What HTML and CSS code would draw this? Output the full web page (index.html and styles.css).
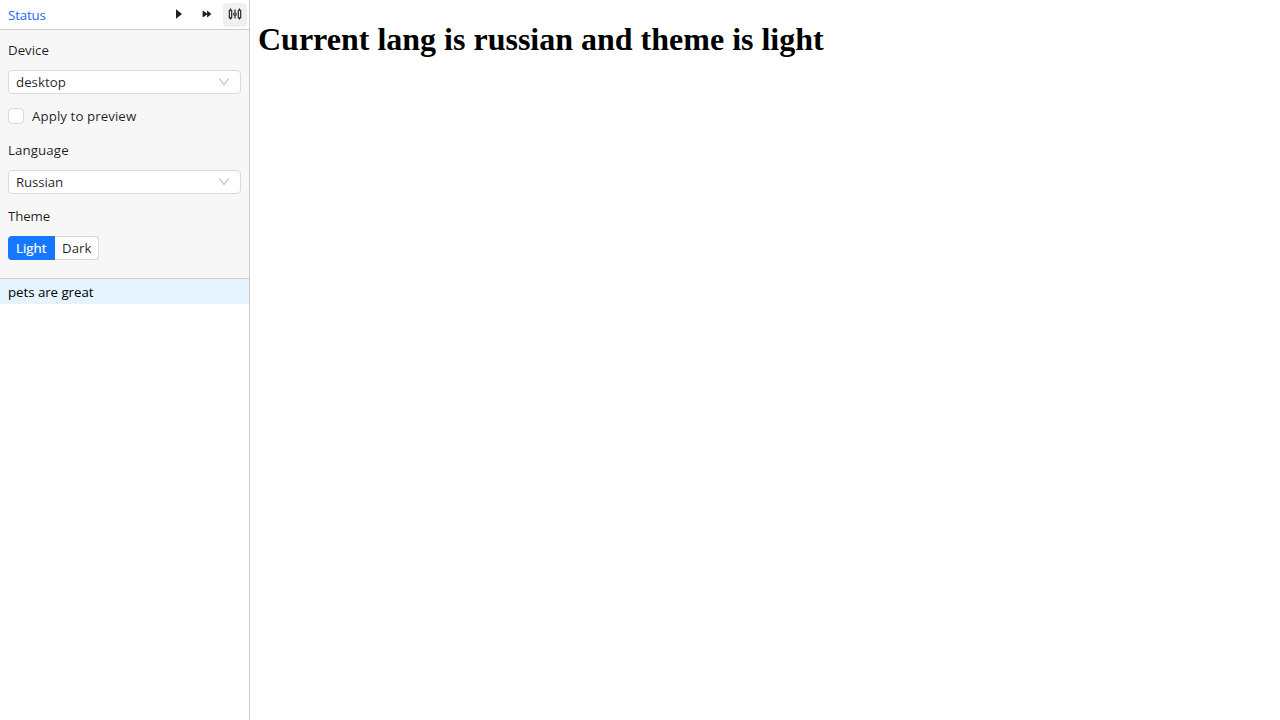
FILE: index.html
```html
<!DOCTYPE html>
<html lang="en">
<head>
<meta charset="utf-8">
<title>Preview</title>
<link rel="stylesheet" href="styles.css">
</head>
<body>
<aside class="sidebar">
  <header class="toolbar">
    <a class="status">Status</a>
    <div class="actions">
      <button class="icon-btn" aria-label="Run"><svg width="14" height="14" viewBox="0 0 14 14"><path d="M4 1.2 10 6 4 10.8Z"/></svg></button>
      <button class="icon-btn" aria-label="Run all"><svg width="14" height="14" viewBox="0 0 14 14"><path d="M2.6 2.5 7.1 5.6V2.5L11.5 6 7.1 9.5V6.5L2.6 9.6Z"/></svg></button>
      <button class="icon-btn active" aria-label="Settings"><svg width="14" height="14" viewBox="0 0 14 14"><path class="line" d="M2.5 .5V2M2.5 10V11.5M1.3 2.2H3.7V9.8H1.3ZM7 1.5V4.3M7 7.7V10.5M11.5 .5V2M11.5 10V11.5M10.3 2.2H12.7V9.8H10.3Z"/><circle class="line" cx="7" cy="6" r="1.3"/></svg></button>
    </div>
  </header>
  <section class="settings">
    <div class="label">Device</div>
    <div class="select"><span>desktop</span><svg class="chevron" width="12" height="12" viewBox="0 0 12 12"><path d="M1.4 2.6 6 8.6 10.6 2.6"/></svg></div>
    <label class="check"><span class="box"></span><span class="check-text">Apply to preview</span></label>
    <div class="label language">Language</div>
    <div class="select"><span class="tight">Russian</span><svg class="chevron" width="12" height="12" viewBox="0 0 12 12"><path d="M1.4 2.6 6 8.6 10.6 2.6"/></svg></div>
    <div class="label tight">Theme</div>
    <div class="segmented"><span class="segment selected">Light</span><span class="segment">Dark</span></div>
  </section>
  <div class="item">pets are great</div>
</aside>
<main class="preview"><h1>Current lang is russian and theme is light</h1></main>
</body>
</html>
```
FILE: styles.css
```css
* { box-sizing: border-box; }
body { margin: 0; height: 100vh; display: flex; background: #fff; overflow: hidden; }
.sidebar {
  width: 250px; flex: none; border-right: 1px solid #ccc;
  font: 13.3px/22px "Open Sans", "Noto Sans", sans-serif; color: rgba(0,0,0,.88);
}
.toolbar { height: 30px; padding: 0 2px 0 8px; display: flex; align-items: center; justify-content: space-between; border-bottom: 1px solid #ccc; }
.status { color: #1668ff; letter-spacing: -.15px; }
.tight { letter-spacing: -.12px; }
.language { letter-spacing: .1px; }
.actions { display: flex; gap: 4px; }
.icon-btn { width: 24px; height: 24px; padding: 0; border: 0; border-radius: 4px; background: none; display: flex; align-items: center; justify-content: center; }
.icon-btn svg { fill: #1f1f1f; }
.icon-btn.active { background: #f0f0f0; }
.icon-btn .line { fill: none; stroke: #1f1f1f; stroke-width: 1.15; stroke-linejoin: round; }
.settings { height: 249px; padding: 9px 8px 0; background: #f7f7f7; border-bottom: 1px solid #ccc; }
.label { height: 22px; margin-bottom: 9px; }
.select { height: 24px; margin-bottom: 11px; padding: 0 10px 0 7px; display: flex; align-items: center; justify-content: space-between; background: #fff; border: 1px solid #d9d9d9; border-radius: 4px; }
.chevron { fill: none; stroke: #bfbfbf; stroke-width: 1.1; }
.check { height: 22px; margin-bottom: 12px; display: flex; align-items: center; gap: 8px; }
.check-text { letter-spacing: .07px; }
.box { width: 16px; height: 16px; border: 1px solid #d9d9d9; border-radius: 4px; background: #fff; }
.segmented { display: flex; width: 91px; height: 24px; }
.segment { width: 44px; background: #fff; border: 1px solid #d9d9d9; border-left: 0; border-radius: 0 4px 4px 0; padding-left: 7px; }
.segment.selected { width: 47px; background: #1677ff; border-color: #1677ff; color: #fff; border-radius: 4px 0 0 4px; padding-left: 8px; -webkit-text-stroke: .2px #fff; }
.item { height: 25px; padding: 2px 8px; background: #e6f4ff; color: #000; letter-spacing: -.05px; }
.preview { padding: 0 8px; }
h1 { margin: 21px 0; font: bold 32px/37px "Liberation Serif", serif; white-space: nowrap; }
```
